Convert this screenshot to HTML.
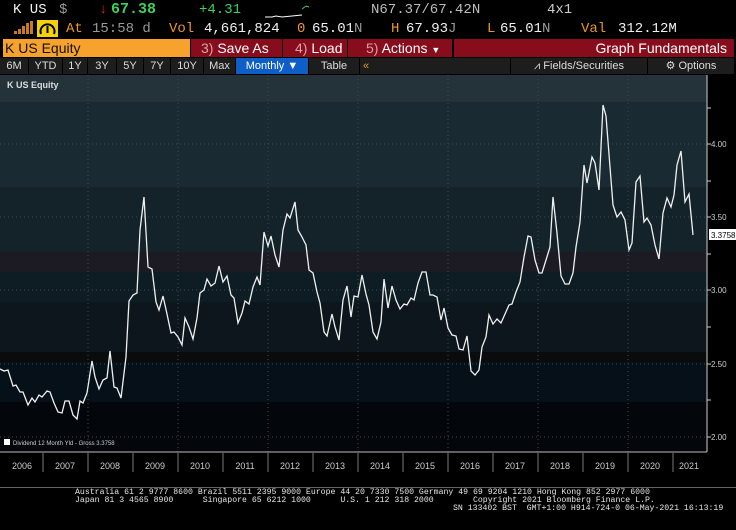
<!DOCTYPE html>
<html><head><meta charset="utf-8"><style>
*{margin:0;padding:0;box-sizing:border-box}
body{width:736px;height:530px;background:#000;position:relative;overflow:hidden;font-family:"Liberation Sans",sans-serif}
.t{position:absolute;white-space:nowrap}
.m{font-family:"Liberation Mono",monospace;font-size:14px;line-height:18px}
.o{color:#e8962a}.w{color:#f0f0f0}.g{color:#9a9a9a}.gr{color:#3cd25a}
.btn{position:absolute;top:39px;height:18px;background:#880d1c;color:#fff;font-size:14px;line-height:18px}
.btn span{color:#d9a0a8}
.tab{position:absolute;top:58px;height:16px;background:#1d1d1d;color:#ddd;font-size:11px;line-height:16px;text-align:center}
.yl{position:absolute;top:461px;font-size:9px;color:#ccc;width:44px;text-align:center}
.ft{position:absolute;left:0;width:736px;font-family:"Liberation Mono",monospace;font-size:8.2px;line-height:8.5px;color:#e6e6e6;white-space:pre}
</style></head><body>
<div class="t m w" style="left:13px;top:1px">K US</div>
<div class="t m g" style="left:59px;top:1px">$</div>
<div class="t m" style="left:99px;top:1px;color:#d22">↓</div>
<div class="t m gr" style="left:111px;top:1px;font-weight:bold;font-size:15px">67.38</div>
<div class="t m gr" style="left:199px;top:1px">+4.31</div>
<svg style="position:absolute;left:262px;top:3px" width="48" height="16"><polyline points="3,14 10,14 14,13 20,14 30,13 40,12" stroke="#fff" fill="none" stroke-width="1"/><polyline points="40,6 44,3 47,4" stroke="#3cd25a" fill="none" stroke-width="1"/></svg>
<div class="t m" style="left:371px;top:1px;color:#bbb">N67.37/67.42N</div>
<div class="t m" style="left:547px;top:1px;color:#ccc">4x1</div>
<svg style="position:absolute;left:14px;top:21px" width="20" height="14"><rect x="0" y="10" width="3" height="3" fill="#c77a1e"/><rect x="4" y="8" width="3" height="5" fill="#c77a1e"/><rect x="8" y="5" width="3" height="8" fill="#c77a1e"/><rect x="12" y="2" width="3" height="11" fill="#c77a1e"/><rect x="16" y="0" width="3" height="13" fill="#c77a1e"/></svg>
<div style="position:absolute;left:37px;top:20px;width:21px;height:17px;background:#f4d20a"><svg width="21" height="17"><path d="M4,14 A7,7 0 1 1 17,14" stroke="#000" stroke-width="2" fill="none"/><line x1="10.5" y1="13" x2="10.5" y2="6" stroke="#000" stroke-width="2"/></svg></div>
<div class="t m o" style="left:66px;top:20px">At</div>
<div class="t m g" style="left:92px;top:20px">15:58 d</div>
<div class="t m o" style="left:169px;top:20px">Vol</div>
<div class="t m w" style="left:204px;top:20px">4,661,824</div>
<div class="t m o" style="left:297px;top:20px">0</div>
<div class="t m w" style="left:312px;top:20px">65.01<span class="g">N</span></div>
<div class="t m o" style="left:391px;top:20px">H</div>
<div class="t m w" style="left:406px;top:20px">67.93<span class="g">J</span></div>
<div class="t m o" style="left:487px;top:20px">L</div>
<div class="t m w" style="left:500px;top:20px">65.01<span class="g">N</span></div>
<div class="t m o" style="left:581px;top:20px">Val</div>
<div class="t m w" style="left:618px;top:20px">312.12M</div>

<div style="position:absolute;left:3px;top:39px;width:187px;height:18px;background:#f7a22c;color:#111;font-size:14px;line-height:18px;padding-left:2px">K US Equity</div>
<div class="btn" style="left:191px;width:91px;padding-left:10px"><span>3)</span> Save As</div>
<div class="btn" style="left:283px;width:64px;padding-left:12px"><span>4)</span> Load</div>
<div class="btn" style="left:348px;width:104px;padding-left:18px"><span>5)</span> Actions <span style="color:#fff;font-size:9px">▼</span></div>
<div class="btn" style="left:454px;width:280px;text-align:right;padding-right:7px">Graph Fundamentals</div>

<div class="tab" style="left:0;width:28px">6M</div>
<div class="tab" style="left:29px;width:33px">YTD</div>
<div class="tab" style="left:63px;width:24px">1Y</div>
<div class="tab" style="left:88px;width:28px">3Y</div>
<div class="tab" style="left:117px;width:26px">5Y</div>
<div class="tab" style="left:144px;width:26px">7Y</div>
<div class="tab" style="left:171px;width:32px">10Y</div>
<div class="tab" style="left:204px;width:31px">Max</div>
<div class="tab" style="left:236px;width:72px;background:#0e5ec8;color:#fff">Monthly ▼</div>
<div class="tab" style="left:309px;width:50px">Table</div>
<div class="tab" style="left:360px;width:150px;text-align:left;padding-left:3px;color:#e8962a">«</div>
<div class="tab" style="left:511px;width:136px">⩘ Fields/Securities</div>
<div class="tab" style="left:648px;width:86px">⚙ Options</div>

<svg style="position:absolute;left:0;top:75px" width="736" height="400">
<rect x="0" y="0" width="707" height="27" fill="#243239"/>
<rect x="0" y="27" width="707" height="85" fill="#1a2a32"/>
<rect x="0" y="112" width="707" height="65" fill="#14222a"/>
<rect x="0" y="177" width="707" height="20" fill="#1c1b23"/>
<rect x="0" y="197" width="707" height="30" fill="#0e1c24"/>
<rect x="0" y="227" width="707" height="50" fill="#0c161c"/>
<rect x="0" y="277" width="707" height="10" fill="#0a0b0d"/>
<rect x="0" y="287" width="707" height="40" fill="#061018"/>
<rect x="0" y="327" width="707" height="50" fill="#03070b"/>
<g stroke="#3a4a52" stroke-dasharray="1,3" stroke-width="1">
<line x1="0" y1="69" x2="707" y2="69"/><line x1="0" y1="142" x2="707" y2="142"/><line x1="0" y1="215" x2="707" y2="215"/><line x1="0" y1="289" x2="707" y2="289"/><line x1="0" y1="362" x2="707" y2="362"/>
<line x1="88" y1="0" x2="88" y2="377"/><line x1="178" y1="0" x2="178" y2="377"/><line x1="268" y1="0" x2="268" y2="377"/><line x1="358" y1="0" x2="358" y2="377"/><line x1="448" y1="0" x2="448" y2="377"/><line x1="538" y1="0" x2="538" y2="377"/><line x1="628" y1="0" x2="628" y2="377"/>
</g>
<line x1="707" y1="0" x2="707" y2="377" stroke="#ccc"/>
<line x1="0" y1="377" x2="707" y2="377" stroke="#bbb"/>
<g stroke="#ccc"><line x1="707" y1="33" x2="711" y2="33"/><line x1="707" y1="69" x2="711" y2="69"/><line x1="707" y1="106" x2="711" y2="106"/><line x1="707" y1="142" x2="711" y2="142"/><line x1="707" y1="179" x2="711" y2="179"/><line x1="707" y1="215" x2="711" y2="215"/><line x1="707" y1="252" x2="711" y2="252"/><line x1="707" y1="289" x2="711" y2="289"/><line x1="707" y1="325" x2="711" y2="325"/><line x1="707" y1="362" x2="711" y2="362"/></g>
<g fill="#ccc" font-size="8" font-family="Liberation Sans,sans-serif"><text x="711" y="72">4.00</text><text x="711" y="145">3.50</text><text x="711" y="218">3.00</text><text x="711" y="292">2.50</text><text x="711" y="365">2.00</text></g>
<rect x="709" y="154" width="27" height="11" fill="#fff"/><text x="711" y="163" font-size="8" fill="#000" font-family="Liberation Sans,sans-serif">3.3758</text>
<text x="7" y="13" font-size="9" font-weight="bold" fill="#ddd" font-family="Liberation Sans,sans-serif">K US Equity</text>
<rect x="4" y="364" width="6" height="6" fill="#fff"/>
<text x="13" y="370" font-size="6" fill="#ccc" font-family="Liberation Sans,sans-serif">Dividend 12 Month Yld - Gross 3.3758</text>
<polyline fill="none" stroke="#f0f0f0" stroke-width="1.3" transform="translate(0,-75)" points="0,369 4,371 8,370 13,386 16,385 20,392 23,392 28,405 32,398 35,402 39,395 42,397 47,391 50,392 54,403 58,412 62,413 65,401 69,401 73,415 77,419 80,401 83,403 87,393 92,361 95,377 99,389 103,380 107,378 110,351 114,387 117,388 121,398 126,357 129,301 133,295 137,293 140,230 144,197 148,267 152,269 156,302 159,310 163,296 167,314 171,333 174,332 178,337 182,345 185,318 189,327 193,339 197,318 200,293 204,290 207,279 211,286 215,283 219,266 223,282 227,276 231,295 234,298 238,323 242,313 245,301 249,304 253,287 257,277 260,285 264,232 268,246 271,236 275,255 279,267 283,230 287,214 290,218 295,202 298,230 302,237 306,245 309,270 313,273 317,292 320,303 324,332 327,336 332,314 335,327 339,340 343,300 347,286 351,317 354,296 358,297 362,275 366,294 369,305 373,332 377,339 381,322 384,279 388,308 392,286 396,300 400,309 404,304 407,305 411,298 414,300 418,283 422,272 426,272 430,295 433,295 437,297 441,320 444,308 448,328 452,335 456,336 459,349 463,350 467,336 471,371 475,375 479,370 482,347 486,337 489,315 493,324 497,319 501,323 509,305 512,304 516,292 520,282 524,257 528,236 531,237 535,260 539,273 542,273 546,260 550,247 553,197 557,233 561,276 565,284 569,284 573,273 576,247 580,222 584,165 587,183 592,157 595,163 599,190 603,105 606,116 610,167 613,205 617,217 621,212 625,220 629,250 632,243 636,182 640,176 644,222 647,218 651,225 655,245 659,259 663,213 667,198 671,207 674,195 677,165 681,151 685,202 689,194 693,235"/>
<g stroke="#777"><line x1="43" y1="378" x2="43" y2="397"/><line x1="88" y1="378" x2="88" y2="397"/><line x1="133" y1="378" x2="133" y2="397"/><line x1="178" y1="378" x2="178" y2="397"/><line x1="223" y1="378" x2="223" y2="397"/><line x1="268" y1="378" x2="268" y2="397"/><line x1="313" y1="378" x2="313" y2="397"/><line x1="358" y1="378" x2="358" y2="397"/><line x1="403" y1="378" x2="403" y2="397"/><line x1="448" y1="378" x2="448" y2="397"/><line x1="493" y1="378" x2="493" y2="397"/><line x1="538" y1="378" x2="538" y2="397"/><line x1="583" y1="378" x2="583" y2="397"/><line x1="628" y1="378" x2="628" y2="397"/><line x1="673" y1="378" x2="673" y2="397"/></g>
</svg>
<div class="yl" style="left:0">2006</div><div class="yl" style="left:43px">2007</div><div class="yl" style="left:88px">2008</div><div class="yl" style="left:133px">2009</div><div class="yl" style="left:178px">2010</div><div class="yl" style="left:223px">2011</div><div class="yl" style="left:268px">2012</div><div class="yl" style="left:313px">2013</div><div class="yl" style="left:358px">2014</div><div class="yl" style="left:403px">2015</div><div class="yl" style="left:448px">2016</div><div class="yl" style="left:493px">2017</div><div class="yl" style="left:538px">2018</div><div class="yl" style="left:583px">2019</div><div class="yl" style="left:628px">2020</div><div class="yl" style="left:667px">2021</div>
<div style="position:absolute;left:0;top:487px;width:736px;height:1px;background:#666"></div>
<div class="ft" style="top:489px;left:75px">Australia 61 2 9777 8600 Brazil 5511 2395 9000 Europe 44 20 7330 7500 Germany 49 69 9204 1210 Hong Kong 852 2977 6000</div>
<div class="ft" style="top:497px;left:75px">Japan 81 3 4565 8900      Singapore 65 6212 1000      U.S. 1 212 318 2000        Copyright 2021 Bloomberg Finance L.P.</div>
<div class="ft" style="top:505px;left:453px">SN 133402 BST  GMT+1:00 H914-724-0 06-May-2021 16:13:19</div>
</body></html>
